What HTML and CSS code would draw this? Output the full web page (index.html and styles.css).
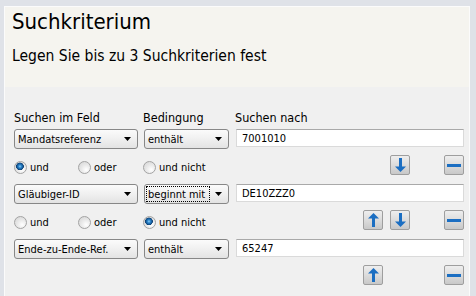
FILE: index.html
```html
<!DOCTYPE html>
<html>
<head>
  <title>Suchkriterium</title>
  <link rel="stylesheet" href="styles.css">
</head>
<body>
  <div class="panel">
    <div class="head">
      <h1 class="title">Suchkriterium</h1>
      <p class="subtitle">Legen Sie bis zu 3 Suchkriterien fest</p>
    </div>
    <div class="form">
      <div class="row labels">
        <span>Suchen im Feld</span>
        <span class="lbl-cond">Bedingung</span>
        <span>Suchen nach</span>
      </div>

      <div class="row crit">
        <div class="combo"><span class="combo-text">Mandatsreferenz</span><span class="combo-arrow"><svg width="7" height="4"><polygon points="0,0 7,0 3.5,4"/></svg></span></div>
        <div class="combo"><span class="combo-text">enthält</span><span class="combo-arrow"><svg width="7" height="4"><polygon points="0,0 7,0 3.5,4"/></svg></span></div>
        <input class="term" type="text" value="7001010">
        <div class="ops">
          <label class="opt"><span class="radio checked"></span>und</label>
          <label class="opt"><span class="radio"></span>oder</label>
          <label class="opt"><span class="radio"></span>und nicht</label>
        </div>
        <div class="tools">
          <button class="tool hidden"></button>
          <button class="tool"><svg width="18" height="18"><rect x="8" y="2" width="3" height="9"/><polygon points="4,10.5 15,10.5 9.5,16"/></svg></button>
          <button class="tool remove"><svg width="18" height="18"><rect x="2" y="8" width="14" height="3"/></svg></button>
        </div>
      </div>

      <div class="row crit">
        <div class="combo"><span class="combo-text">Gläubiger-ID</span><span class="combo-arrow"><svg width="7" height="4"><polygon points="0,0 7,0 3.5,4"/></svg></span></div>
        <div class="combo focused"><span class="combo-text">beginnt mit</span><span class="combo-arrow"><svg width="7" height="4"><polygon points="0,0 7,0 3.5,4"/></svg></span></div>
        <input class="term" type="text" value="DE10ZZZ0">
        <div class="ops">
          <label class="opt"><span class="radio"></span>und</label>
          <label class="opt"><span class="radio"></span>oder</label>
          <label class="opt"><span class="radio checked"></span>und nicht</label>
        </div>
        <div class="tools">
          <button class="tool"><svg width="18" height="18"><rect x="8" y="7" width="3" height="9"/><polygon points="4,7.5 15,7.5 9.5,2"/></svg></button>
          <button class="tool"><svg width="18" height="18"><rect x="8" y="2" width="3" height="9"/><polygon points="4,10.5 15,10.5 9.5,16"/></svg></button>
          <button class="tool remove"><svg width="18" height="18"><rect x="2" y="8" width="14" height="3"/></svg></button>
        </div>
      </div>

      <div class="row crit">
        <div class="combo"><span class="combo-text">Ende-zu-Ende-Ref.</span><span class="combo-arrow"><svg width="7" height="4"><polygon points="0,0 7,0 3.5,4"/></svg></span></div>
        <div class="combo"><span class="combo-text">enthält</span><span class="combo-arrow"><svg width="7" height="4"><polygon points="0,0 7,0 3.5,4"/></svg></span></div>
        <input class="term" type="text" value="65247">
        <div class="ops"></div>
        <div class="tools">
          <button class="tool"><svg width="18" height="18"><rect x="8" y="7" width="3" height="9"/><polygon points="4,7.5 15,7.5 9.5,2"/></svg></button>
          <button class="tool hidden"></button>
          <button class="tool remove"><svg width="18" height="18"><rect x="2" y="8" width="14" height="3"/></svg></button>
        </div>
      </div>
    </div>
  </div>
</body>
</html>
```

FILE: styles.css
```css
html, body { height: 100%; }

body {
 margin: 0;
 background-color: #dfe2e8;
 font-family: "DejaVu Sans Condensed", "DejaVu Sans", sans-serif;
 font-stretch: condensed;
 color: #000;
 overflow: hidden;
}

.panel {
 box-sizing: border-box;
 height: calc(100% - 6px);
 margin: 6px 6px 0 4px;
 border: 1px solid #fbfbfb;
 border-bottom: none;
 background-color: #f0f0f0;
}

.head {
 box-sizing: border-box;
 height: 80px;
 padding: 2px 7px 0;
 background-color: #f5f4ef;
}

.title {
 margin: 0;
 font-size: 22px;
 font-weight: normal;
 line-height: 26px;
}

.subtitle {
 margin: 12px 0 0;
 font-size: 15.5px;
 line-height: 19px;
}

.form {
 padding: 23px 5px 0 9px;
}

.row {
 display: grid;
 grid-template-columns: 124px 85px 1fr;
 column-gap: 6px;
}

.labels {
 font-size: 12.5px;
 line-height: 15px;
 margin-bottom: 4px;
}

.lbl-cond {
 margin-left: -1px;
}

.crit {
 row-gap: 6px;
}

.crit + .crit {
 margin-top: 9px;
}

.combo {
 box-sizing: border-box;
 display: flex;
 height: 20px;
 padding: 1px;
 border: 1px solid #878787;
 border-radius: 3px;
 background: linear-gradient(#fbfbfb, #f0f0f0 50%, #e3e3e3);
 font-size: 11px;
}

.combo-text {
 box-sizing: border-box;
 flex: 1;
 height: 16px;
 padding: 1px 0 0 1px;
 border: 1px dotted transparent;
 line-height: 14px;
 white-space: nowrap;
 overflow: hidden;
}

.focused .combo-text {
 border-color: #000;
}

.combo-arrow {
 width: 17px;
 display: flex;
 align-items: center;
 justify-content: center;
}

.combo-arrow svg {
 display: block;
 fill: #000;
}

.term {
 box-sizing: border-box;
 height: 18px;
 margin: 0 0 0 1px;
 padding: 0 5px;
 border: 1px solid #dadada;
 border-top-color: #a9a9a9;
 background: #fff;
 font-family: inherit;
 font-stretch: condensed;
 font-size: 11px;
 color: #000;
 outline: none;
}

.ops {
 grid-column: span 2;
 display: flex;
 align-items: flex-end;
 padding-bottom: 1px;
}

.opt {
 display: flex;
 align-items: center;
 gap: 3px;
 width: 64px;
 height: 13px;
 font-size: 11px;
 line-height: 13px;
}

.opt:nth-child(2) {
 width: 65px;
}

.radio {
 box-sizing: border-box;
 width: 13px;
 height: 13px;
 border: 1px solid #a3a3a3;
 border-radius: 50%;
 background: radial-gradient(circle at 65% 70%, #ffffff, #e9e9e9 45%, #d3d3d3);
}

.radio.checked {
 background:
  radial-gradient(circle at 45% 40%, #8fd0f7 0, #2d86cc 1.5px, #135694 3px, #0f3f70 3.6px, transparent 4.1px),
  radial-gradient(circle at 65% 70%, #ffffff, #e9e9e9 45%, #d3d3d3);
}

.tools {
 display: flex;
 justify-content: flex-end;
 gap: 7px;
}

.tool {
 box-sizing: border-box;
 width: 20px;
 height: 20px;
 padding: 0;
 border: 1px solid #9e9e9e;
 border-radius: 2px;
 background: linear-gradient(#eeeeee, #dcdcdc 50%, #c8c8c8);
}

.tool svg {
 display: block;
 fill: #1b6ec2;
}

.tool.remove {
 margin-left: 27px;
}

.tool.hidden {
 visibility: hidden;
}
```
